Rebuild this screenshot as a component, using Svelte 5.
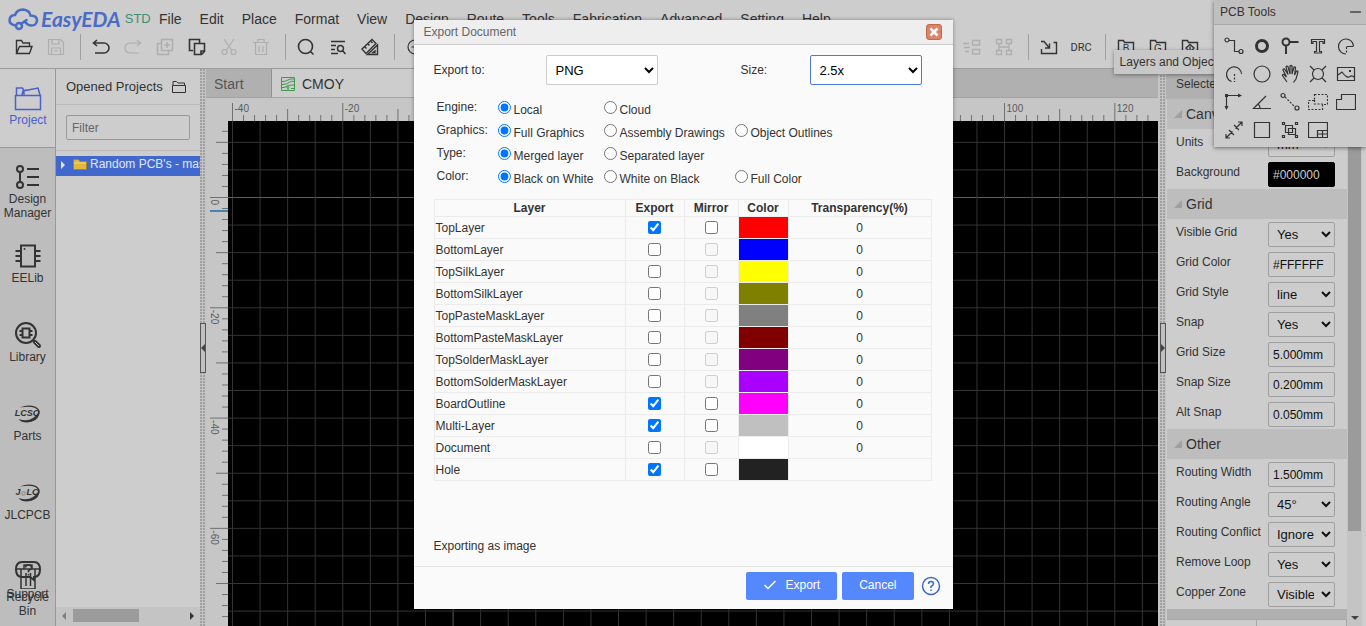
<script lang="ts">
  interface Layer {
    name: string;
    color: string;
    exported: boolean;
    mirror: boolean;
    alpha: string;
  }
  interface Prop {
    label: string;
    value: string;
    kind: "select" | "text";
    dark?: boolean;
  }

  const menus = ["File", "Edit", "Place", "Format", "View", "Design", "Route", "Tools", "Fabrication", "Advanced", "Setting", "Help"];

  // stroke paths on a 20x20 box; dash = dashed part, fill = solid part
  const icons: Record<string, { d?: string; dash?: string; fill?: string; w?: number; text?: string }> = {
    open: { d: "M2.500 16V3.500h5l1.500 2.500h6.500v3M2.500 16.500L5.500 9.500h12.500l-2.500 7z", w: 1.4 },
    save: { d: "M2.500 2.500h12l3 3v12h-15zM5.500 17v-6h9v6M6 3v4h7v-4M8 14h4" },
    undo: { d: "M6 3L2.500 6L6 9M2.500 6h10.500a5 5 0 0 1 0 10h-9", w: 1.6 },
    redo: { d: "M14 3l3.500 3l-3.500 3M17.500 6h-10.500a5 5 0 0 0 0 10h9" },
    dup: { d: "M6.500 2.500h11v11h-11zM6 6.500H2.500v11h11V14M12 5v6M9 8h6", w: 1.5 },
    copy: { d: "M6 13.500H2.500v-11h10V6M7.500 6.500h10v8l-3 3h-7zM17 14h-3v3", w: 1.6 },
    cut: { d: "M5 2l7.500 11M15 2L7.500 13M8 15a2.500 2.500 0 1 1-5 0a2.500 2.500 0 0 1 5 0M17 15a2.500 2.500 0 1 1-5 0a2.500 2.500 0 0 1 5 0" },
    trash: { d: "M2 5.500h16M7 5V2.500h6V5M4.500 6v11.500h11V6M8 9v6M12 9v6" },
    search: { d: "M16.500 9.500a7 7 0 1 1-14 0a7 7 0 0 1 14 0M14.500 14.500l3 3", w: 1.6 },
    find: { d: "M3 4.500h14M3 8.500h5M3 12.500h4M3 16.500h7M15.500 11.500a3 3 0 1 1-6 0a3 3 0 0 1 6 0M14.500 13.500l3 3.500", w: 1.5 },
    ruler: { d: "M2 12L12 2.500l4 4L6 16.500zM5 10l1.500 1.500M8 7l1.500 1.500M11 4.500l1.500 1.500M17.500 8v9.500h-10zM15 14v1.500h-2z", w: 1.4 },
    zoomin: { d: "M17 10a7 7 0 1 1-14 0a7 7 0 0 1 14 0M6.500 10h7M10 6.500v7" },
    align: { d: "M1 6.500h6M3 14.500h4M10.500 3.500h7v4.500h-7zM10.500 12.500h7v4.500h-7zM2 10.500h6", w: 1.4 },
    distribute: { d: "M2.500 2.500h5v4h-5zM12.500 2.500h5v4h-5zM2.500 13.500h5v4h-5zM12.500 13.500h5v4h-5zM5 7v3h10v-3M5 13v-3M15 13v-3", w: 1.4 },
    import: { d: "M2.500 12v4.500h15v-11h-3M2 4.500h3l5 6M10.500 6.500v4.500h-4.500", w: 1.4 },
    folderB: { d: "M2.500 18V3.500h5l1 2h9v12", w: 1.4, text: "B" },
    folderG: { d: "M2.500 18V3.500h5l1 2h9v12", w: 1.4, text: "G" },
    folderX: { d: "M2.500 18V3.500h5l1 2h9v12M6 11l4-3.500l4 3.500l-4 4zM10 9.500v4", w: 1.4 },
    track: { d: "M5 4a2 2 0 1 1-4 0a2 2 0 0 1 4 0M5 4.500h5.500v11h4.500M19 15.500a2 2 0 1 1-4 0a2 2 0 0 1 4 0" },
    pad: { d: "M15.500 10a5.500 5.500 0 1 1-11 0a5.500 5.500 0 0 1 11 0", w: 3 },
    via: { d: "M9.500 6a3.500 3.500 0 1 1-7 0a3.500 3.500 0 0 1 7 0M10 6h8.500M6 10v8", w: 2 },
    text: { d: "M3.500 3.500h13v4h-1.500v-2h-3.500v10h2v1.500h-7v-1.500h2v-10H5v2h-1.500z" },
    arc: { d: "M17.500 10A7.500 7.500 0 1 0 10 18M10.500 10.500h7", dash: "M10.500 11v7" },
    arc2: { d: "M17.500 10A7.500 7.500 0 1 0 7.500 17.500", dash: "M10.500 10v8" },
    circle: { d: "M18 10a8 8 0 1 1-16 0a8 8 0 0 1 16 0" },
    hand: { d: "M7 18L2.500 11.500q0-1.500 1.500-1l2.500 2.500L3 6q0-1.500 1.500-1L8 10.500L6 3q.5-1.500 2-.500l2 7.500V2q1-1 2 0v8l2-7q1.500-.5 1.500 1L14.500 11l2-4q1.500-.5 1.500 1L16 15l-2.500 3.500" },
    burst: { d: "M15.500 10a5.500 5.500 0 1 1-11 0a5.500 5.500 0 0 1 11 0M2 2l4 4M18 2l-4 4M2 18l4-4M18 18l-4-4" },
    image: { d: "M1.500 3.500h17v13h-17zM2 11l4-3q5 7 8 4.500q2-1.500 4.500 1", fill: "M13 6h2v2h-2z" },
    axis: { d: "M2.500 17V3.500H16", fill: "M1 2h3v3H1zM14 1.500l4 2l-4 2zM.5 14l2 4l2-4z" },
    angle: { d: "M19 16.500H1.500L14 4M6 12q2 1.500 2 4" },
    link: { d: "M5 3.500a2 2 0 1 1-4 0a2 2 0 0 1 4 0M19 16a2 2 0 1 1-4 0a2 2 0 0 1 4 0", dash: "M5 5l10 10" },
    region: { dash: "M6.500 2.500h13v10h-5v5h-14v-9h6zM6.500 8v4h8" },
    solid: { d: "M.5 17.500v-10h5v-5h14v15z" },
    dim: { d: "M2 18l6.500-6.500M11.500 8.500L18 2M2 14v4h4M14 2h4v4M5 10l5 5M10 5l5 5" },
    rect: { d: "M2.500 2.500h15v15h-15z" },
    group: { d: "M5.500 5.500h7v7h-7zM8.500 8.500h7v6h-7zM2.500 2.500h2v2h-2zM15.500 2.500h2v2h-2zM2.500 15.500h2v2h-2zM15.500 15.500h2v2h-2z" },
    panelize: { d: "M.5 2.500h19v15h-19zM9.500 17v-6.500h10M9.500 14h10M14.500 11v6" },
  };

  const toolsLeft = ["open", "save", "|", "undo", "redo", "dup", "copy", "cut", "trash", "|", "search", "find", "ruler", "|", "zoomin"];
  const toolsRight = ["align", "distribute", "|", "import", "DRC", "|", "folderB", "folderG", "folderX"];
  const dimmed = ["save", "redo", "dup", "cut", "trash", "align", "distribute"];
  const pcbTools = ["track", "pad", "via", "text", "arc", "arc2", "circle", "hand", "burst", "image", "axis", "angle", "link", "region", "solid", "dim", "rect", "group", "panelize"];

  // canvas scale: 20 units are a bit over 110px
  const unit = 110.29 / 20;
  const originX = 26.5;
  const originY = 99.5;
  const gridLines = Array.from({ length: 60 }, (_, i) => i);
  const cols = Array.from({ length: 90 }, (_, i) => i);
  const rows = Array.from({ length: 45 }, (_, i) => i - 6);

  function tick(i: number) {
    if (i % 10 === 0) return 18;
    return i % 5 === 0 ? 12 : 6;
  }

  const canvasProps: Prop[] = [
    { label: "Units", value: "mm", kind: "select" },
    { label: "Background", value: "#000000", kind: "text", dark: true },
  ];
  const gridProps: Prop[] = [
    { label: "Visible Grid", value: "Yes", kind: "select" },
    { label: "Grid Color", value: "#FFFFFF", kind: "text" },
    { label: "Grid Style", value: "line", kind: "select" },
    { label: "Snap", value: "Yes", kind: "select" },
    { label: "Grid Size", value: "5.000mm", kind: "text" },
    { label: "Snap Size", value: "0.200mm", kind: "text" },
    { label: "Alt Snap", value: "0.050mm", kind: "text" },
  ];
  const otherProps: Prop[] = [
    { label: "Routing Width", value: "1.500mm", kind: "text" },
    { label: "Routing Angle", value: "45°", kind: "select" },
    { label: "Routing Conflict", value: "Ignore", kind: "select" },
    { label: "Remove Loop", value: "Yes", kind: "select" },
    { label: "Copper Zone", value: "Visible", kind: "select" },
  ];
  const sections = [
    { title: "Canvas", props: canvasProps },
    { title: "Grid", props: gridProps },
    { title: "Other", props: otherProps },
  ];

  const options = [
    { label: "Engine", values: ["Local", "Cloud"] },
    { label: "Graphics", values: ["Full Graphics", "Assembly Drawings", "Object Outlines"] },
    { label: "Type", values: ["Merged layer", "Separated layer"] },
    { label: "Color", values: ["Black on White", "White on Black", "Full Color"] },
  ];
  let picked = $state(options.map((o) => o.values[0]));

  let layers = $state<Layer[]>([
    { name: "TopLayer", color: "#ff0000", exported: true, mirror: true, alpha: "0" },
    { name: "BottomLayer", color: "#0000ff", exported: false, mirror: false, alpha: "0" },
    { name: "TopSilkLayer", color: "#ffff00", exported: false, mirror: false, alpha: "0" },
    { name: "BottomSilkLayer", color: "#808000", exported: false, mirror: false, alpha: "0" },
    { name: "TopPasteMaskLayer", color: "#808080", exported: false, mirror: false, alpha: "0" },
    { name: "BottomPasteMaskLayer", color: "#800000", exported: false, mirror: false, alpha: "0" },
    { name: "TopSolderMaskLayer", color: "#800080", exported: false, mirror: false, alpha: "0" },
    { name: "BottomSolderMaskLayer", color: "#aa00ff", exported: false, mirror: false, alpha: "0" },
    { name: "BoardOutline", color: "#ff00ff", exported: true, mirror: true, alpha: "0" },
    { name: "Multi-Layer", color: "#c0c0c0", exported: true, mirror: true, alpha: "0" },
    { name: "Document", color: "#ffffff", exported: false, mirror: false, alpha: "0" },
    { name: "Hole", color: "#222222", exported: true, mirror: true, alpha: "" },
  ]);
</script>

{#snippet icon(name: string)}
  {@const ic = icons[name]}
  <svg width="20" height="20" viewBox="0 0 20 20" fill="none" stroke="currentColor" stroke-width={ic.w ?? 1.2}>
    {#if ic.d}<path d={ic.d} />{/if}
    {#if ic.dash}<path d={ic.dash} stroke-dasharray="2 1.500" />{/if}
    {#if ic.fill}<path d={ic.fill} fill="currentColor" stroke="none" />{/if}
    {#if ic.text}<text x="10" y="15" font-size="10" text-anchor="middle" fill="currentColor" stroke="none">{ic.text}</text>{/if}
  </svg>
{/snippet}

{#snippet toolbar(items: string[])}
  {#each items as t}
    {#if t === "|"}
      <span class="sep"></span>
    {:else if t === "DRC"}
      <button class="tool drc">DRC</button>
    {:else}
      <button class="tool" class:dim={dimmed.includes(t)} aria-label={t}>{@render icon(t)}</button>
    {/if}
  {/each}
{/snippet}

<div class="app">
  <header>
    <div class="menubar">
      <a class="logo" href="#home">
        <svg width="32" height="24" viewBox="0 0 32 24" fill="none" stroke="#4a6bc6" stroke-width="2.500" stroke-linecap="round">
          <path d="M8.500 18.500Q2.500 17.500 2.500 13Q3 8 8 8Q10 2.500 16 2.500Q22.500 3 23.500 8.500Q30 8.500 30 13.500Q29.500 18.500 24.500 18.500Q21 18.500 18 15" />
          <circle cx="12" cy="19" r="3" />
          <path d="M14 17l5.500-4" />
        </svg>
        <b>EasyEDA</b><span>STD</span>
      </a>
      <nav>
        {#each menus as m}<a href="#{m}">{m}</a>{/each}
      </nav>
    </div>
    <div class="toolbar">
      {@render toolbar(toolsLeft)}
      <div class="right">{@render toolbar(toolsRight)}</div>
    </div>
  </header>

  <main>
    <aside class="side">
      <button class="item active">
        <svg width="28" height="28" viewBox="0 0 28 28" fill="none" stroke="currentColor" stroke-width="1.500">
          <path d="M1.500 11.500h25v14h-25zM2.500 11V4h6l1.500 2.500v4M8 11l1-4l15-3l2 7M12 6.500l-1-.5" />
        </svg>
        <span>Project</span>
      </button>
      <button class="item">
        <svg width="28" height="28" viewBox="0 0 28 28" fill="none" stroke="currentColor" stroke-width="2">
          <circle cx="6" cy="6" r="3" /><circle cx="6" cy="22" r="3" />
          <path d="M6 9v10M13 6h12M13 14h12M13 22h12" />
        </svg>
        <span>Design<br />Manager</span>
      </button>
      <button class="item">
        <svg width="28" height="28" viewBox="0 0 28 28" fill="none" stroke="currentColor" stroke-width="2">
          <path d="M7 3.500h14v21H7zM1.500 9H7M1.500 14H7M1.500 19H7M21 9h5.500M21 14h5.500M21 19h5.500" />
          <circle cx="10.500" cy="7" r="1" fill="currentColor" stroke="none" />
        </svg>
        <span>EELib</span>
      </button>
      <button class="item">
        <svg width="28" height="28" viewBox="0 0 28 28" fill="none" stroke="currentColor" stroke-width="2">
          <circle cx="12" cy="12" r="10" />
          <path d="M8.500 7.500h7v9h-7zM5.500 10h3M5.500 14h3M15.500 10h3M15.500 14h3M19 19l2 2" />
          <path d="M21 21l4 4" stroke-width="4" stroke-linecap="round" />
          <path d="M21 21l4 4" stroke="#bdbdbd" stroke-width="1" />
        </svg>
        <span>Library</span>
      </button>
      <button class="item">
        <svg width="28" height="28" viewBox="0 0 28 28" fill="#333">
          <path d="M6 7.500Q14 4 21 6.500Q27 9.500 25.500 14Q23 22 13 22.500Q7 22.500 4.500 19Q13 22 19 18Q25 14 24 10.500Q21 5 6 7.500z" />
          <text x="13" y="16" class="brand">LCSC</text>
        </svg>
        <span>Parts</span>
      </button>
      <button class="item">
        <svg width="28" height="28" viewBox="0 0 28 28" fill="#333">
          <path d="M6 7.500Q14 4 21 6.500Q27 9.500 25.500 14Q23 22 13 22.500Q7 22.500 4.500 19Q13 22 19 18Q25 14 24 10.500Q21 5 6 7.500z" />
          <text x="13" y="16" class="brand">J<tspan class="faint">@</tspan>LC</text>
        </svg>
        <span>JLCPCB</span>
      </button>
      <button class="item">
        <svg width="28" height="28" viewBox="0 0 28 28" fill="none" stroke="currentColor" stroke-width="2">
          <path d="M8 4h12q6 0 6 7.500t-6 7.500v3l-4-3H8q-6 0-6-7.500t6-7.500" />
          <path d="M11.500 9.500q0-2.500 3-2.500t3 2.500q0 2-3 3v2M14.500 16v1.500" stroke-width="1.500" />
        </svg>
        <span>Support</span>
      </button>
      <button class="item bin">
        <svg width="28" height="28" viewBox="0 0 28 28" fill="none" stroke="currentColor" stroke-width="1.500">
          <path d="M3 8h22M10 8V4h8v4M7 8v20h14V8M12 12v13M16.500 12v13" />
        </svg>
        <span>Recycle<br />Bin</span>
      </button>
    </aside>

    <section class="projects">
      <div class="title">
        <span>Opened Projects</span>
        <svg width="16" height="14" viewBox="0 0 16 14" fill="none" stroke="currentColor">
          <path d="M1.500 5.500h13v7h-13zM2 5V1.500h3.500L7 3h6.500v2" />
        </svg>
      </div>
      <div class="filter"><input type="text" placeholder="Filter" aria-label="Filter" /></div>
      <div class="tree">
        <button class="node">
          <i></i>
          <svg width="14" height="12" viewBox="0 0 14 12"><path d="M.5 1.500h5l1.500 2h6.500v8H.5z" fill="#e0b840" stroke="#a88420" /><path d="M1 5h12" stroke="#f3dc80" /></svg>
          <span>Random PCB's - master</span>
        </button>
      </div>
      <div class="hscroll"><i class="left"></i><div class="track"><div class="thumb"></div></div><i class="rightArrow"></i></div>
    </section>

    <div class="splitter"><button aria-label="Collapse left panel"><i class="toLeft"></i></button></div>

    <section class="editor">
      <div class="tabs">
        <button class="tab">Start</button>
        <button class="tab on">
          <svg width="16" height="16" viewBox="0 0 16 16" fill="none" stroke="#3f9a4c">
            <path d="M1.500 1.500h13v13h-13zM2 5.500q4 0 6-1.500t6-1M2 8.500q5 0 7-2t5-1M2 11.500h2q4-3 10-2.500M8 14v-1.500M11 12.500h3" />
            <circle cx="8" cy="11.500" r="1" />
          </svg>
          CMOY
        </button>
      </div>
      <svg class="canvas" width="100%" height="100%">
        <rect width="100%" height="100%" fill="#c6c6c6" />
        <rect x="22" y="23" width="100%" height="100%" fill="#000" />
        {#each gridLines as i}
          <line class:axis={i === 8} class="grid" x1={originX + i * unit * 5} x2={originX + i * unit * 5} y1="23" y2="100%" />
          <line class:axis={i === 2} class="grid" y1={originY + (i - 2) * unit * 5} y2={originY + (i - 2) * unit * 5} x1="22" x2="100%" />
        {/each}
        {#each cols as i}
          <line class="tick" x1={originX + i * unit * 2} x2={originX + i * unit * 2} y1={23 - tick(i)} y2="23" />
          {#if i % 10 === 0}
            <text x={originX + i * unit * 2 + 2} y="14">{-40 + i * 2}</text>
          {/if}
        {/each}
        {#each rows as i}
          {@const y = originY + i * unit * 2}
          {#if y > 23}
            <line class="tick" x1={22 - tick(i)} x2="22" y1={y} y2={y} />
            {#if i % 10 === 0}
              <text transform="translate(5 {y + 2}) rotate(90)">{-i * 2 || 0}</text>
            {/if}
          {/if}
        {/each}
        <line x1="4" x2="22" y1="113" y2="113" stroke="#1d6ba8" stroke-width="1.500" />
      </svg>
    </section>

    <div class="splitter east"><button aria-label="Collapse right panel"><i class="toRight"></i></button></div>

    <aside class="props">
      <div class="propsHead">Selected Objects</div>
      <div class="propsBody">
        <div class="list">
          {#each sections as s}
            <h3><svg width="8" height="8" viewBox="0 0 8 8"><path d="M8 0v8H0z" fill="#a0a0a0" /></svg>{s.title}</h3>
            {#each s.props as p}
              <label class="prop">
                <span>{p.label}</span>
                {#if p.kind === "select"}
                  <select><option>{p.value}</option></select>
                {:else}
                  <input type="text" class:dark={p.dark} value={p.value} />
                {/if}
              </label>
            {/each}
          {/each}
          <div class="band"></div>
          <div class="cells"><div></div><div></div></div>
        </div>
        <div class="vscroll"><div class="thumb"></div><i></i></div>
      </div>
    </aside>
  </main>

  <div class="tip">Layers and Objects</div>

  <div class="tools">
    <div class="toolsHead"><span>PCB Tools</span><button aria-label="Minimize"></button></div>
    <div class="toolsGrid">
      {#each pcbTools as t}<button aria-label={t}>{@render icon(t)}</button>{/each}
    </div>
  </div>

  <div class="scrim">
    <div class="dialog" role="dialog" aria-label="Export Document">
      <div class="dlgHead">
        <span>Export Document</span>
        <button aria-label="Close">
          <svg width="14" height="14" viewBox="0 0 14 14" stroke="#fff" stroke-width="2.500"><path d="M3.500 3.500l7 7M10.500 3.500l-7 7" /></svg>
        </button>
      </div>
      <div class="dlgBody">
        <div class="pick">
          <label for="format">Export to:</label>
          <select id="format"><option>PNG</option></select>
          <label for="size">Size:</label>
          <select id="size" class="focus"><option>2.5x</option></select>
        </div>
        <div class="options">
          {#each options as o, i}
            <span class="name">{o.label}:</span>
            {#each o.values as v, j}
              <label class="radio" style:grid-column={j + 2}>
                <input type="radio" name={o.label} value={v} bind:group={picked[i]} /><span>{v}</span>
              </label>
            {/each}
          {/each}
        </div>
        <table>
          <colgroup><col class="c1" /><col class="c2" /><col class="c3" /><col class="c4" /><col /></colgroup>
          <thead>
            <tr><th>Layer</th><th>Export</th><th>Mirror</th><th>Color</th><th>Transparency(%)</th></tr>
          </thead>
          <tbody>
            {#each layers as l}
              <tr>
                <td class="layer">{l.name}</td>
                <td><input type="checkbox" aria-label="Export {l.name}" bind:checked={l.exported} /></td>
                <td><input type="checkbox" aria-label="Mirror {l.name}" disabled={!l.mirror} /></td>
                <td class="swatch"><div style:background={l.color}></div></td>
                <td>{l.alpha}</td>
              </tr>
            {/each}
          </tbody>
        </table>
        <p>Exporting as image</p>
      </div>
      <div class="dlgFoot">
        <button class="btn">
          <svg width="14" height="10" viewBox="0 0 14 10" fill="none" stroke="#fff" stroke-width="1.500"><path d="M1.500 5l3.500 3.500L12.500 1" /></svg>
          Export
        </button>
        <button class="btn">Cancel</button>
        <a href="#help" aria-label="Help">
          <svg width="20" height="20" viewBox="0 0 20 20" fill="none" stroke="#3d68c8" stroke-width="1.500">
            <circle cx="10" cy="10" r="8.500" />
            <path d="M7.500 8q0-2.500 2.500-2.500t2.500 2.300q0 1.500-2.500 2.700v1.500M10 13.500v1.500" />
          </svg>
        </a>
      </div>
    </div>
  </div>
</div>

<style>
  :global(body) {
    overflow: hidden;
  }
  .app {
    position: relative;
    display: flex;
    flex-direction: column;
    height: 100vh;
    overflow: hidden;
    background: #cdcdcd;
    color: #333;
    font: 12px/14px "Liberation Sans", Arial, sans-serif;
  }
  .app * {
    box-sizing: border-box;
  }
  button,
  input,
  select {
    font: inherit;
    color: inherit;
  }
  button {
    padding: 0;
    border: 0;
    background: none;
  }
  svg {
    display: block;
    flex: none;
  }
  a {
    color: inherit;
    text-decoration: none;
  }

  header {
    flex: none;
    border-bottom: 1px solid #9c9c9c;
  }
  .menubar {
    display: flex;
    align-items: center;
    height: 32px;
    padding: 6px 0 0 7px;
  }
  .logo {
    display: flex;
    align-items: center;
    width: 152px;
    color: #3b8f76;
    font-size: 13px;
  }
  .logo b {
    margin: 0 4px 0 2px;
    color: #4a6bc6;
    font: italic bold 21px/24px Lato, sans-serif;
  }
  nav {
    display: flex;
    gap: 18px;
    font-size: 14px;
    line-height: 16px;
  }
  .toolbar {
    display: flex;
    align-items: center;
    height: 36px;
    padding: 0 160px 6px 8px;
  }
  .right {
    display: flex;
    align-items: center;
    margin-left: auto;
  }
  .tool {
    display: grid;
    place-items: center;
    width: 32px;
    height: 28px;
  }
  .tool.dim {
    color: #aeaeae;
  }
  .drc {
    font: 11px "Roboto", sans-serif;
  }
  .sep {
    width: 1px;
    height: 26px;
    margin: 0 4px 0 8px;
    background: #a0a0a0;
  }

  main {
    display: flex;
    flex: 1;
    min-height: 0;
  }
  .side {
    position: relative;
    width: 56px;
    flex: none;
    overflow: hidden;
    border-right: 1px solid #999;
    background: #bdbdbd;
  }
  .item {
    display: flex;
    flex-direction: column;
    align-items: center;
    gap: 1px;
    width: 55px;
    height: 79px;
    padding-top: 15px;
  }
  .item.active {
    width: 56px;
    border-bottom: 1px solid #999;
    background: #cdcdcd;
    color: #4a61cc;
  }
  .item.bin {
    position: absolute;
    left: 0;
    bottom: 8px;
    height: auto;
    padding: 0;
  }
  .brand {
    font-size: 9px;
    font-style: italic;
    font-weight: bold;
    text-anchor: middle;
    fill: #333;
  }
  .faint {
    font-size: 6px;
    fill: #888;
  }

  .projects {
    display: flex;
    flex-direction: column;
    width: 144px;
    flex: none;
    overflow: hidden;
  }
  .title {
    display: flex;
    align-items: center;
    gap: 8px;
    height: 36px;
    padding-left: 10px;
    border-bottom: 1px solid #bababa;
    font-size: 13px;
    white-space: nowrap;
  }
  .filter {
    height: 46px;
    padding: 10px;
    border-bottom: 1px solid #bababa;
  }
  .filter input {
    width: 100%;
    height: 25px;
    padding: 0 5px;
    border: 1px solid #999;
    border-radius: 2px;
    background: none;
  }
  .filter input::placeholder {
    color: #666;
  }
  .tree {
    flex: 1;
    padding-top: 5px;
  }
  .node {
    display: flex;
    align-items: center;
    width: 100%;
    height: 20px;
    padding: 0 0 4px 5px;
    background: #4169cd;
    color: #e0e6f8;
    white-space: nowrap;
  }
  .node i {
    margin: 2px 8px 0 0;
    border: 4px solid transparent;
    border-left-color: #e0e6f8;
    border-right: 0;
  }
  .node svg {
    margin-right: 3px;
  }
  .hscroll {
    display: flex;
    align-items: center;
    height: 19px;
    padding: 0 6px 2px;
    background: #c4c4c4;
  }
  .hscroll .track {
    flex: 1;
    padding-left: 7px;
  }
  .hscroll .thumb {
    width: 66px;
    height: 13px;
    background: #9b9b9b;
  }
  .hscroll i {
    border: 4px solid transparent;
  }
  .hscroll .left {
    border-left: 0;
    border-right-color: #808080;
  }
  .hscroll .rightArrow {
    border-right: 0;
    border-left-color: #333;
  }

  .splitter {
    display: flex;
    align-items: center;
    flex: none;
    background: #c4c4c4 radial-gradient(circle at 1px 1px, #a0a0a0 1px, transparent 1px) 0 0 / 3px 3px;
  }
  .splitter.east {
    border-left: 2px solid #c6c6c6;
  }
  .splitter button {
    display: grid;
    place-items: center;
    width: 6px;
    height: 50px;
    border: 1px solid #555;
    background: #c0c0c0;
  }
  .splitter i {
    border: 4px solid transparent;
  }
  .splitter .toLeft {
    border-left-width: 0;
    border-right-color: #444;
  }
  .splitter .toRight {
    border-right-width: 0;
    border-left-color: #444;
  }

  .editor {
    display: flex;
    flex-direction: column;
    flex: 1;
    min-width: 0;
  }
  .tabs {
    display: flex;
    flex: none;
    height: 29px;
    border-bottom: 1px solid #a4a4a4;
    background: #b0b0b0;
    font-size: 14px;
  }
  .tab {
    display: flex;
    align-items: center;
    gap: 6px;
    width: 66px;
    padding: 2px 0 0 8px;
    border-right: 1px solid #909090;
    color: #555;
  }
  .tab.on {
    width: 150px;
    background: #cdcdcd;
    color: #333;
  }
  .canvas {
    flex: 1;
    min-height: 0;
  }
  .canvas text {
    font-size: 10px;
    fill: #555c62;
  }
  .grid {
    stroke: #343434;
  }
  .axis {
    stroke: #5c5c5c;
  }
  .tick {
    stroke: #707070;
  }

  .props {
    display: flex;
    flex-direction: column;
    width: 200px;
    flex: none;
  }
  .propsHead {
    flex: none;
    height: 30px;
    padding: 8px 10px;
    background: #b0b0b0;
  }
  .propsBody {
    display: flex;
    flex: 1;
    min-height: 0;
    overflow: hidden;
  }
  .list {
    flex: 1;
    padding-left: 1px;
  }
  h3 {
    display: flex;
    align-items: center;
    gap: 4px;
    height: 30px;
    margin: 0;
    padding-left: 7px;
    background: #bdbdbd;
    font-size: 14px;
    font-weight: normal;
  }
  .prop {
    display: flex;
    justify-content: space-between;
    height: 30px;
    padding: 3px 12px 0 9px;
  }
  .prop span {
    padding-top: 3px;
    white-space: nowrap;
  }
  .prop input,
  .prop select {
    width: 67px;
    height: 25px;
    border: 1px solid #a0a0a0;
    border-radius: 2px;
    background: #cdcdcd;
    color: #111;
  }
  .prop input {
    padding: 0 4px;
  }
  .prop input.dark {
    border-color: #000;
    background: #000;
    color: #cdcdcd;
  }
  .prop select {
    padding: 0 4px;
    font-size: 13px;
  }
  .band {
    height: 10px;
    background: #b0b0b0;
  }
  .cells {
    display: flex;
    height: 20px;
    border-top: 1px solid #a8a8a8;
  }
  .cells div {
    flex: 1;
    border-right: 1px solid #a8a8a8;
  }
  .vscroll {
    display: flex;
    flex-direction: column;
    justify-content: space-between;
    align-items: center;
    width: 15px;
    margin-right: 4px;
    padding-bottom: 6px;
    background: #c4c4c4;
  }
  .vscroll .thumb {
    width: 13px;
    height: 83%;
    background: #9b9b9b;
  }
  .vscroll i {
    border: 4px solid transparent;
    border-top-color: #444;
    border-bottom: 0;
  }

  .tip {
    position: absolute;
    top: 50px;
    right: 137px;
    padding: 5px 6px;
    background: #c8c8c8;
    box-shadow: 0 1px 4px rgba(0, 0, 0, 0.4);
  }
  .tools {
    position: absolute;
    top: 0;
    right: 0;
    background: #cbcbcb;
    box-shadow: 0 1px 4px rgba(0, 0, 0, 0.5);
  }
  .toolsHead {
    display: flex;
    justify-content: space-between;
    align-items: center;
    height: 25px;
    padding: 0 5px 0 6px;
    border-bottom: 1px solid #aaa;
    background: #bfbfbf;
  }
  .toolsHead button {
    width: 11px;
    height: 2px;
    background: #666;
  }
  .toolsGrid {
    display: grid;
    grid-template-columns: repeat(5, 28px);
    padding: 7px 6px 3px;
  }
  .toolsGrid button {
    display: grid;
    place-items: center;
    height: 28px;
  }

  .scrim {
    position: absolute;
    inset: 0;
    display: grid;
    place-items: center;
    padding-top: 3px;
  }
  .dialog {
    width: 539px;
    background: #fafafa;
    box-shadow: 0 0 4px rgba(0, 0, 0, 0.4);
  }
  .dlgHead {
    display: flex;
    justify-content: space-between;
    align-items: center;
    height: 25px;
    padding: 0 11px 0 10px;
    border-bottom: 1px solid #ccc;
    background: #eee;
    color: #666;
  }
  .dlgHead button {
    border: 1px solid #c0694e;
    border-radius: 3px;
    background: #dc8468;
  }
  .dlgBody {
    padding: 10px 21px 13px 20px;
  }
  .pick {
    display: grid;
    grid-template-columns: 112px 195px 69px 112px;
    align-items: center;
  }
  .pick select {
    width: 112px;
    height: 30px;
    padding: 0 5px;
    border: 1px solid #ccc;
    border-radius: 2px;
    background: #fff;
    color: #000;
    font-size: 13px;
  }
  .pick select.focus {
    border-color: #4d7bdc;
  }
  .options {
    display: grid;
    grid-template-columns: 61px 106px 131px 1fr;
    grid-auto-rows: 23px;
    align-items: center;
    margin: 11px 3px;
  }
  .name {
    grid-column: 1;
    padding-bottom: 1px;
  }
  .radio {
    display: flex;
    align-items: center;
    gap: 3px;
    white-space: nowrap;
  }
  .radio span {
    padding-top: 4px;
  }
  input[type="radio"],
  input[type="checkbox"] {
    display: block;
    width: 13px;
    height: 13px;
    margin: 0 auto;
  }
  .radio input[type="radio"] {
    margin: 0;
  }
  table {
    width: 100%;
    table-layout: fixed;
    border-collapse: collapse;
    text-align: center;
  }
  .c1 {
    width: 191px;
  }
  .c2 {
    width: 59px;
  }
  .c3 {
    width: 54px;
  }
  .c4 {
    width: 50px;
  }
  th,
  td {
    height: 22px;
    padding: 0;
    border: 1px solid #ececec;
  }
  th {
    height: 17px;
  }
  .layer {
    padding-left: 1px;
    text-align: left;
  }
  .swatch div {
    height: 21px;
  }
  p {
    margin: 58px 0 0;
  }
  .dlgFoot {
    display: flex;
    align-items: center;
    justify-content: flex-end;
    gap: 5px;
    height: 43px;
    padding: 0 12px 4px 0;
    border-top: 1px solid #e4e4e4;
  }
  .btn {
    display: flex;
    align-items: center;
    gap: 8px;
    height: 28px;
    padding: 0 17px 2px;
    border-radius: 2px;
    background: #5588ff;
    color: #fff;
  }
  .dlgFoot a {
    margin-left: 2px;
  }
</style>
